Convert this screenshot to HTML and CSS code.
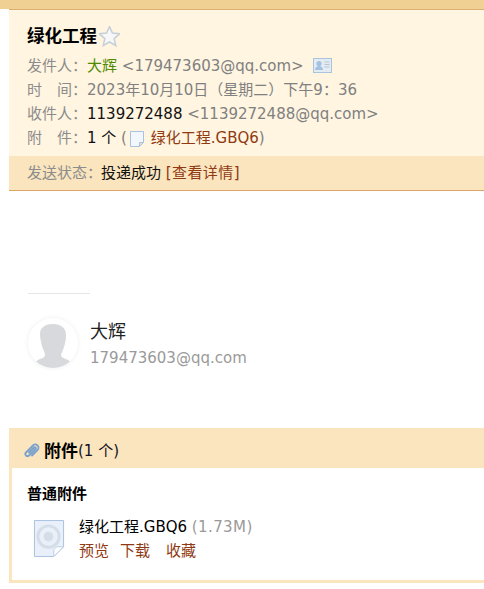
FILE: index.html
```html
<!DOCTYPE html>
<html lang="zh">
<head>
<meta charset="utf-8">
<title>绿化工程</title>
<link rel="stylesheet" href="styles.css">
</head>
<body>
<div class="topbar"></div>
<section class="mailhead">
  <h1 class="subject">绿化工程<svg class="star" width="21" height="21" viewBox="1 1 18 18"><path d="M10 1.500l2.500 5.600 6.100.6-4.600 4.100 1.400 6-5.400-3.100-5.400 3.100 1.400-6-4.600-4.100 6.100-.6z" fill="#f7f7f7" stroke="#c6cfda" stroke-width="1.300"/></svg></h1>
  <div class="row"><span class="label">发件人：</span><span class="sender">大辉</span> <span class="muted">&lt;179473603@qq.com&gt;</span><svg class="card" width="19" height="15" viewBox="0 0 19 15"><rect x=".5" y=".5" width="18" height="14" fill="#e4ecf2" stroke="#a9c4de"/><circle cx="6" cy="5.500" r="2.600" fill="#a3c2e2"/><path d="M2 12c0-3 2-4 4-4s4 1 4 4z" fill="#a3c2e2"/><path d="M11.500 4h5M11.500 6.500h5M11.500 9h5" stroke="#b5c6d6"/></svg></div>
  <div class="row"><span class="label">时　间：</span><span class="muted">2023年10月10日（星期二）下午9：36</span></div>
  <div class="row"><span class="label">收件人：</span><span class="dark">1139272488</span> <span class="muted">&lt;1139272488@qq.com&gt;</span></div>
  <div class="row"><span class="label">附　件：</span><span class="dark">1 个</span> <span class="muted">(</span><svg class="doc" width="16" height="18" viewBox="0 0 16 18"><path d="M1.500 1.500h13v11l-4 4h-9z" fill="#f3f7fd" stroke="#a8c2e2"/><path d="M14.500 12.500h-4v4z" fill="#f2e2b8" stroke="#a8c2e2"/></svg> <span class="filelink">绿化工程.GBQ6</span><span class="muted">)</span></div>
</section>
<div class="status"><span class="label">发送状态：</span><span class="dark state">投递成功</span> <span class="details">[查看详情]</span></div>

<div class="signature">
  <hr class="rule">
  <div class="person">
    <div class="avatar"><svg width="50" height="50" viewBox="0 0 50 50"><path d="M12 16c0-7 6-10 13-10 8 0 13 4 13 11 0 5-1 9-2 12-1 4-3 6-3 8 0 2 2 3 5 4 3 1 5 3 6 5-4 3-11 4-19 4s-14-1-19-4c1-2 3-4 6-5 3-1 5-2 5-4 0-3-2-5-3-9-1-4-2-8-2-12z" fill="#d8d9dd"/></svg></div>
    <div>
      <div class="name">大辉</div>
      <div class="addr">179473603@qq.com</div>
    </div>
  </div>
</div>

<section class="attach">
  <h2 class="attach-head"><svg class="clip" width="17" height="16" viewBox="0 0 17 16"><path d="M6 9.500l5-5c1-1 2.500.5 1.500 1.500l-6.500 6.500c-2 2-5-1-3-3l7-7c3-3 7.500 1.500 4.500 4.500l-5.500 5.500" fill="none" stroke="#7ba2cc" stroke-width="1.800" stroke-linecap="round"/></svg>附件<span class="count">(1 个)</span></h2>
  <div class="attach-body">
    <h3 class="kind">普通附件</h3>
    <div class="file">
      <svg class="fileicon" width="33" height="39" viewBox="0 0 34 40"><path d="M1.500 1.500h30v27l-10 10h-20z" fill="#e9f0fa" stroke="#a8c0e0"/><path d="M31.500 28.500l-10 10v-7l3-3z" fill="#fff" stroke="#bccde4"/><circle cx="16" cy="18" r="11" fill="none" stroke="#d5dde8" stroke-width="3"/><circle cx="16" cy="18" r="5" fill="#d5dde8"/></svg>
      <div>
        <div class="fname">绿化工程.GBQ6 <span class="size">(1.73M)</span></div>
        <div class="links"><span>预览</span><span>下载</span><span class="collect">收藏</span></div>
      </div>
    </div>
  </div>
</section>
</body>
</html>
```
FILE: styles.css
```css
* { box-sizing: border-box; }
html, body { margin: 0; overflow: hidden; }
body {
  height: 589px;
  padding-left: 9px;
  background: #fff;
  font: 15px/24px "DejaVu Sans", "Noto Sans CJK SC", sans-serif;
  color: #000;
}
.topbar { height: 9px; margin-left: -9px; background: #f0d093; }
.mailhead { height: 147px; padding: 13px 18px 0; background: #fff5e1; border-top: 1px solid #dcae73; }
.subject { margin: 0 0 5px; height: 26px; font-size: 17.500px; line-height: 26px; font-weight: 700; display: flex; align-items: center; gap: 2px; }
.row { white-space: nowrap; height: 24px; }
.label { color: #8c8c8c; }
.muted { color: #808080; }
.sender { color: #4f8a00; }
.dark { color: #111; }
.card { margin-left: 9px; vertical-align: -2px; }
.doc { margin-left: 2px; margin-right: 1px; vertical-align: -5px; }
.filelink { color: #8f3a12; }
.status { height: 35px; padding: 5px 18px 0; background: #fae5bf; border-bottom: 1px solid #dda566; white-space: nowrap; }
.state { margin-left: -1px; }
.details { color: #8f3a12; letter-spacing: .4px; }
.signature { height: 237px; padding: 102px 19px 0; }
.rule { width: 62px; margin: 0 0 24px; border: 0; border-top: 1px solid #e4e6e8; }
.person { display: flex; gap: 12px; align-items: flex-start; }
.avatar { width: 50px; height: 50px; border-radius: 50%; overflow: hidden; background: #fff; box-shadow: 0 0 5px #eeeeee; }
.avatar svg { display: block; }
.name { font-size: 18px; line-height: 27px; color: #222; }
.addr { font-size: 15px; line-height: 27px; color: #9a9a9a; }
.attach { height: 155px; border-left: 3px solid #fae5bf; border-bottom: 3px solid #fae5bf; }
.attach-head { margin: 0; height: 40px; padding: 6px 0 0 11px; background: #fae5bf; font-size: 17px; line-height: 34px; font-weight: 700; display: flex; align-items: center; gap: 4px; white-space: nowrap; }
.clip { flex: none; }
.count { font-size: 15px; font-weight: 400; color: #112; margin-left: -4px; }
.attach-body { padding: 14px 15px 0; }
.kind { margin: 0 0 10px; font-size: 15px; line-height: 24px; font-weight: 700; }
.file { display: flex; gap: 13px; padding-left: 6px; align-items: flex-start; }
.fileicon { flex: none; margin-top: 3px; }
.fname { white-space: nowrap; line-height: 22px; }
.size { color: #9a9a9a; letter-spacing: .4px; }
.links { display: flex; gap: 11px; line-height: 24px; color: #8f3a12; margin-top: 1px; }
.links .collect { margin-left: 5px; }
```
